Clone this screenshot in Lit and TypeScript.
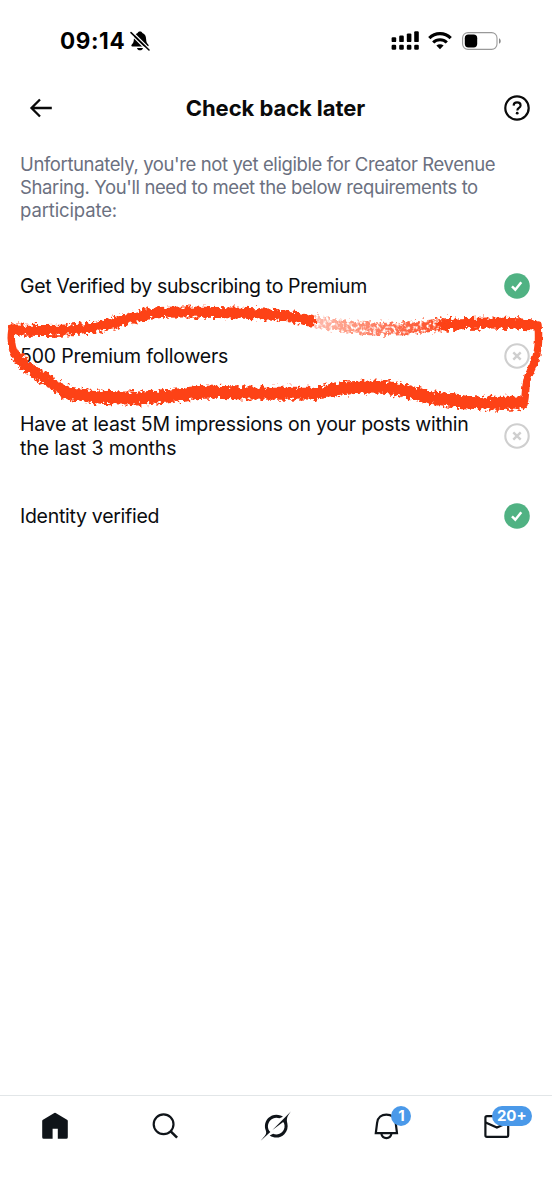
import { LitElement, html, svg, css } from "lit";
import { customElement } from "lit/decorators.js";

const check = html`<svg class="mark" viewBox="0 0 26 26">
  <circle cx="13" cy="13" r="12.8" fill="#50b283" />
  <path d="M8 13.4l3.3 3.3 6-7.4" fill="none" stroke="#fff" stroke-width="2.5" />
</svg>`;

const cross = html`<svg class="mark" viewBox="0 0 26 26" fill="none" stroke="#cfcfcf">
  <circle cx="13" cy="13" r="11.7" stroke-width="2.1" />
  <path d="M9.3 9.3l7.4 7.4M16.7 9.3l-7.4 7.4" stroke-width="2.4" />
</svg>`;

const requirements = [
  { lines: [{ text: "Get Verified by subscribing to Premium", fit: "t4" }], met: true },
  { lines: [{ text: "500 Premium followers", fit: "t2" }], met: false },
  {
    lines: [
      { text: "Have at least 5M impressions on your posts within", fit: "t3" },
      { text: "the last 3 months", fit: "t1" },
    ],
    met: false,
  },
  { lines: [{ text: "Identity verified", fit: "t3" }], met: true },
];

@customElement("status-bar")
class StatusBar extends LitElement {
  static styles = css`
    :host { display: flex; height: 80px; align-items: center; padding: 2px 51px 0 60px; box-sizing: border-box; }
    .time { font: 700 22.500px/28px Inter, sans-serif; letter-spacing: .6px; color: #000; }
    svg { display: block; flex: none; }
    .bell { margin: 0 auto 0 5px; }
    .wifi { margin: 0 10px 0 9px; }
  `;
  render() {
    return html`
      <span class="time">09:14</span>
      <svg class="bell" width="20" height="20" viewBox="0 0 20 20">
        <path d="M10 .6c1.500 0 2.100.7 2.400 1.500 2.600.9 3.600 3.200 3.700 5.900.1 3 .8 4.200 2.100 5.500.8.8.6 1.900-.6 1.900H2.400c-1.200 0-1.400-1.100-.6-1.900C3.100 12.200 3.800 11 3.900 8c.1-2.700 1.100-5 3.700-5.900C7.900 1.300 8.500.6 10 .6zM7 16.900h6c-.3 1.500-1.500 2.400-3 2.400s-2.700-.9-3-2.400z" />
        <path d="M0 2.600L17 19.500M2.100.5L20 18.200" stroke="#fff" stroke-width="1.300" />
        <path d="M1 1.600l18 17.400" stroke="#000" stroke-width="1.500" stroke-linecap="round" />
      </svg>
      <svg width="28" height="20" viewBox="0 0 28 20">
        <rect x=".6" y="6.200" width="4.600" height="4.900" rx="1.200" /><rect x="8.200" y="4.500" width="4.600" height="6.600" rx="1.200" />
        <rect x="15.800" y="2.400" width="4.600" height="8.700" rx="1.200" /><rect x="23.200" y=".2" width="4.600" height="10.900" rx="1.200" />
        ${[0.6, 8.2, 15.8, 23.2].map((x) => svg`<rect x=${x} y="13.800" width="4.600" height="4.900" rx="1.300" />`)}
      </svg>
      <svg class="wifi" width="24" height="18" viewBox="0 0 24 18" fill="none" stroke="#000">
        <path d="M1.300 6.100a15.200 15.200 0 0 1 21.400 0" stroke-width="3.200" />
        <path d="M5.200 10.500a9.700 9.700 0 0 1 13.600 0" stroke-width="3.100" />
        <path d="M12 17.300l-3.600-3.700a5.200 5.200 0 0 1 7.200 0z" fill="#000" stroke="none" />
      </svg>
      <svg width="39" height="18" viewBox="0 0 39 18">
        <rect x=".6" y=".6" width="34.400" height="16.800" rx="5.400" fill="none" stroke="#999" stroke-width="1.100" />
        <rect x="2.800" y="2.600" width="12.400" height="12.800" rx="3.600" />
        <path d="M37 6.200c2.300 1 2.300 4.600 0 5.600z" fill="#888" />
      </svg>
    `;
  }
}

@customElement("tab-bar")
class TabBar extends LitElement {
  static styles = css`
    :host { display: grid; grid-template-columns: repeat(5, 1fr); height: 105px; box-sizing: border-box; border-top: 1px solid #e2e6e8; padding: 14px 0 0; align-items: start; justify-items: center; }
    .tab { position: relative; width: 32px; height: 32px; }
    svg { display: block; width: 32px; height: 32px; overflow: visible; }
    .badge { position: absolute; top: -4px; box-sizing: border-box; height: 20px; border-radius: 10px; background: #4a99e9; color: #fff; font: 700 15px/20px Inter, sans-serif; text-align: center; }
    .one { left: 21px; width: 20px; }
    .many { left: 11px; width: 40px; }
  `;
  render() {
    return html`
      <div class="tab"><svg viewBox="0 0 32 32" fill="#0f1419">
        <path d="M15.300 2.900q.7-.4 1.400 0L28 9.700q.8.500.8 1.400V27.200q0 1.600-1.600 1.600H18.800V18.800H13.600V28.800H4.800q-1.600 0-1.600-1.600V11.100q0-.9.8-1.400z" />
      </svg></div>
      <div class="tab"><svg viewBox="0 0 32 32" fill="none" stroke="#0f1419" stroke-width="2.200">
        <circle cx="13.600" cy="14.300" r="9.900" /><path d="M20.700 21.400l6.400 6.200" stroke-width="2.600" />
      </svg></div>
      <div class="tab"><svg viewBox="0 0 32 32" fill="#0f1419">
        <g transform="translate(.7 1.200) scale(.92)"><path d="M12.745 20.540l10.970-8.190c.539-.4 1.307-.244 1.564.38 1.349 3.288.746 7.241-1.938 9.955-2.683 2.714-6.417 3.310-9.830 1.954l-3.728 1.745c5.347 3.697 11.840 2.782 15.898-1.324 3.219-3.255 4.216-7.692 3.284-11.693l.008.009c-1.351-5.878.332-8.227 3.782-13.031L33 0l-4.540 4.590v-.014L12.743 20.544m-2.263 1.987c-3.837-3.707-3.175-9.446.1-12.755 2.420-2.449 6.388-3.448 9.852-1.979l3.720-1.737c-.67-.49-1.530-1.017-2.515-1.387-4.455-1.854-9.789-.931-13.410 2.728-3.483 3.523-4.579 8.940-2.697 13.561 1.405 3.454-.899 5.898-3.220 8.364C1.490 30.200.666 31.074 0 32l10.478-9.466" /></g>
      </svg></div>
      <div class="tab"><svg viewBox="0 0 32 32" fill="none" stroke="#0f1419" stroke-width="2.200">
        <path d="M5.800 23.200L7.100 12.800C7.700 7.500 11.700 4.600 16.400 4.600S25.100 7.500 25.700 12.800L27 23.200z" /><path d="M11.300 23.400c.5 3 2.600 4.700 5.100 4.700s4.600-1.700 5.100-4.700" />
      </svg><span class="badge one">1</span></div>
      <div class="tab"><svg viewBox="0 0 32 32" fill="none" stroke="#0f1419" stroke-width="2.200">
        <rect x="4.400" y="6.200" width="22.800" height="20.600" rx="1.600" /><path d="M4.600 12.400l11.300 5.200 11.300-5.200" />
      </svg><span class="badge many">20+</span></div>
    `;
  }
}

@customElement("app-root")
class AppRoot extends LitElement {
  static styles = css`
    :host { position: relative; display: flex; flex-direction: column; height: 1200px; overflow: hidden; background: #fff; color: #0b0d10; font-family: Inter, sans-serif; }
    header { display: grid; grid-template-columns: 26px 1fr 26px; align-items: center; height: 56px; padding: 0 22px 0 28px; box-sizing: border-box; }
    header svg { display: block; width: 26px; height: 26px; }
    h1 { margin: 0; padding-right: 7px; text-align: center; font-size: 22px; line-height: 28px; font-weight: 700; color: #0a0a0a; letter-spacing: -.06px; }
    .intro { margin: 17px 20px 0; font-size: 18.500px; line-height: 23px; color: #6b7080; white-space: nowrap; }
    .intro span, .label span { display: block; }
    .t1 { letter-spacing: -.13px; }
    .t2 { letter-spacing: -.2px; }
    .t3 { letter-spacing: -.28px; }
    .t4 { letter-spacing: -.36px; }
    .t5 { letter-spacing: -.39px; }
    .list { display: flex; flex-direction: column; padding: 29px 22px 0 20px; }
    .row { display: flex; justify-content: space-between; align-items: center; height: 70px; }
    .row.tall { height: 90px; }
    .label { font-size: 19.500px; line-height: 24px; white-space: nowrap; }
    .mark { width: 26px; height: 26px; flex: none; }
    tab-bar { margin-top: auto; }
    .scribble { position: absolute; left: 0; top: 290px; width: 552px; height: 130px; pointer-events: none; }
  `;
  render() {
    return html`
      <status-bar></status-bar>
      <header>
        <svg viewBox="0 0 26 26" fill="none" stroke="#0a0a0a" stroke-width="2.300"><path d="M23.800 13H3.500M12 4.500L3.500 13l8.500 8.500" /></svg>
        <h1>Check back later</h1>
        <svg viewBox="0 0 26 26" fill="none" stroke="#0a0a0a"><circle cx="13" cy="13" r="11.700" stroke-width="2.200" /><path d="M9.600 10.600c.1-2 1.500-3.200 3.500-3.200s3.500 1.200 3.500 3c0 2.500-3.300 2.500-3.300 5" stroke-width="2.100" /><circle cx="13.200" cy="18.200" r="1.400" fill="#0a0a0a" stroke="none" /></svg>
      </header>
      <div class="intro">
        <span class="t5">Unfortunately, you're not yet eligible for Creator Revenue</span>
        <span class="t5">Sharing. You'll need to meet the below requirements to</span>
        <span class="t1">participate:</span>
      </div>
      <div class="list">
        ${requirements.map((r) => html`<div class="row ${r.lines.length > 1 ? "tall" : ""}">
          <div class="label">${r.lines.map((l) => html`<span class=${l.fit}>${l.text}</span>`)}</div>
          ${r.met ? check : cross}
        </div>`)}
      </div>
      <svg class="scribble" viewBox="0 290 552 130" fill="none" stroke="#fd4219" stroke-linecap="round" stroke-linejoin="round">
        <defs>
          <filter id="crayon" filterUnits="userSpaceOnUse" x="0" y="290" width="552" height="130">
            <feTurbulence type="fractalNoise" baseFrequency=".28" numOctaves="2" seed="4" result="n" />
            <feDisplacementMap in="SourceGraphic" in2="n" scale="10" xChannelSelector="R" yChannelSelector="G" />
            <feGaussianBlur stdDeviation=".45" />
          </filter>
          <filter id="edge" filterUnits="userSpaceOnUse" x="0" y="290" width="552" height="130">
            <feTurbulence type="fractalNoise" baseFrequency=".2" numOctaves="2" seed="7" result="n" />
            <feDisplacementMap in="SourceGraphic" in2="n" scale="4" xChannelSelector="R" yChannelSelector="G" />
            <feGaussianBlur stdDeviation=".4" />
          </filter>
          <filter id="chalk" filterUnits="userSpaceOnUse" x="0" y="290" width="552" height="130">
            <feTurbulence type="fractalNoise" baseFrequency=".3" numOctaves="2" seed="9" result="n" />
            <feDisplacementMap in="SourceGraphic" in2="n" scale="11" xChannelSelector="R" yChannelSelector="G" result="d" />
            <feColorMatrix in="n" type="matrix" values="0 0 0 0 0  0 0 0 0 0  0 0 0 0 0  0 0 0 4 -1.100" result="m" />
            <feComposite in="d" in2="m" operator="in" />
            <feGaussianBlur stdDeviation=".5" />
          </filter>
          <linearGradient id="fade" gradientUnits="userSpaceOnUse" x1="314" y1="0" x2="445" y2="0">
            <stop offset="0" stop-color="#fd4219" stop-opacity=".35" /><stop offset=".5" stop-color="#fd4219" stop-opacity=".7" /><stop offset="1" stop-color="#fd4219" stop-opacity=".95" />
          </linearGradient>
        </defs>
        <g filter="url(#crayon)">
          <path stroke-width="11" d="M15 330C35 330 65 332 90 328S130 317 155 313C185 310 240 314 270 314Q295 317 310 321" />
          <path stroke-width="11" d="M443 325C465 323 500 322 534 325" />
          <path stroke-width="13" d="M520 403C485 404 450 402 425 396S395 387 370 387C340 387 335 391 315 393C280 393 250 394 210 392C190 392 170 398 135 398Q85 398 65 392" />
          <path stroke-width="11" d="M70 393Q58 388 49 381C35 372 26 368 19 359" />
        </g>
        <path stroke-width="7.500" d="M12 328C10 341 12 353 20 361" filter="url(#edge)" />
        <path stroke-width="7.500" d="M538 325C540 347 537 358 530 372C524 382 527 390 524 404" filter="url(#edge)" />
        <path stroke="url(#fade)" stroke-width="12" stroke-linecap="butt" d="M314 321C325 323 340 327 365 328C400 330 420 327 448 324" filter="url(#chalk)" />
      </svg>
      <tab-bar></tab-bar>
    `;
  }
}
